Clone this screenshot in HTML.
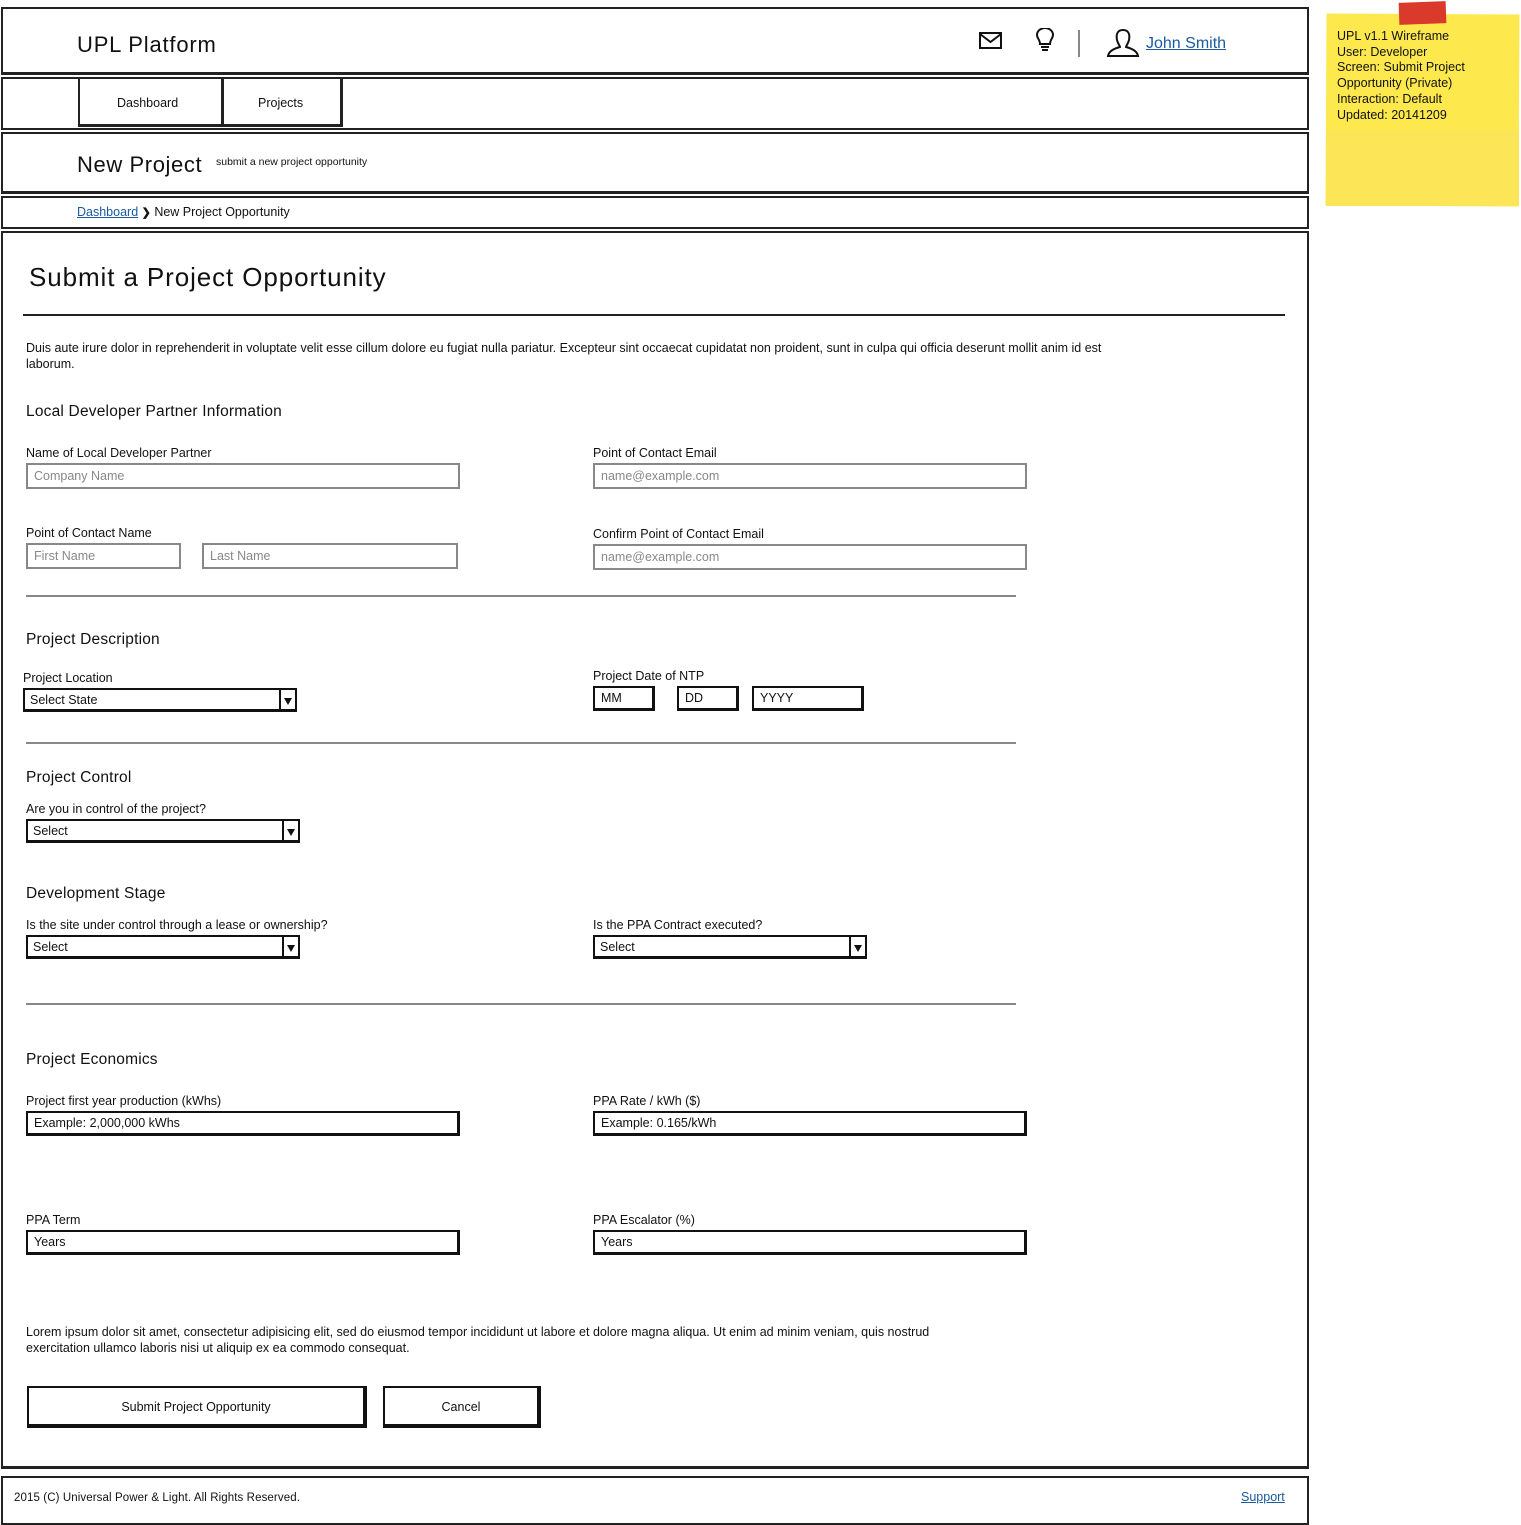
<!DOCTYPE html>
<html><head><meta charset="utf-8">
<style>
*{box-sizing:border-box;margin:0;padding:0}
body{width:1521px;height:1525px;background:#fff;position:relative;font-family:"Liberation Sans",sans-serif;color:#111;overflow:hidden}
.a{position:absolute}
.box{position:absolute;border:2px solid #222;background:#fff}
.t{position:absolute;font-size:12.5px;white-space:nowrap;margin-top:1px}
.h{position:absolute;font-size:15.5px;white-space:nowrap;margin-top:1px;letter-spacing:0.2px}
.in{position:absolute;border:2px solid #888;height:26px;font-size:12.5px;color:#888;padding:4px 6px;background:#fff}
.in2{position:absolute;border:2px solid #111;height:25px;font-size:12.5px;color:#111;padding:3px 6px;background:#fff;border-right-width:3px;border-bottom-width:3px}
.sel{position:absolute;border:2px solid #111;height:24px;font-size:12.5px;padding:3px 5px;background:#fff;border-bottom-width:3px}
.sel:after{content:"";position:absolute;right:14px;top:-2px;bottom:-3px;border-left:2px solid #111}
.sel i{position:absolute;right:3px;top:8px;width:0;height:0;border-left:4px solid transparent;border-right:4px solid transparent;border-top:7px solid #111}
.hr{position:absolute;height:2px;background:#888}
.btn{position:absolute;border:2px solid #111;border-right-width:4px;border-bottom-width:4px;background:#fff;font-size:12.5px;text-align:center}
a{color:#1a5aa0;text-decoration:underline}
</style></head><body>

<!-- header -->
<div class="box" style="left:1px;top:7px;width:1308px;height:68px;border-bottom-width:3px"></div>
<div class="a" style="left:77px;top:32px;font-size:22px;letter-spacing:0.8px">UPL Platform</div>
<svg class="a" style="left:978px;top:31px" width="26" height="20" viewBox="0 0 26 20"><rect x="2" y="2" width="21" height="15" fill="none" stroke="#111" stroke-width="2"/><path d="M2 3 L12.5 11 L23 3" fill="none" stroke="#111" stroke-width="2"/></svg>
<svg class="a" style="left:1035px;top:28px" width="20" height="26" viewBox="0 0 20 26"><path d="M5 16 C5 12 2 10 2 7 A8 7 0 0 1 18 7 C18 10 15 12 15 16 Z" fill="none" stroke="#111" stroke-width="2"/><path d="M6 19 H14 M7 22 H13" stroke="#111" stroke-width="2"/></svg>
<div class="a" style="left:1078px;top:30px;width:2px;height:27px;background:#888"></div>
<svg class="a" style="left:1106px;top:28px" width="34" height="30" viewBox="0 0 34 30"><path d="M17 2 C11 2 10 7 11 12 C12 16 14 18 14 19 C10 20 3 22 2 28 H32 C31 22 24 20 20 19 C20 18 22 16 23 12 C24 7 23 2 17 2 Z" fill="none" stroke="#111" stroke-width="2"/></svg>
<div class="a" style="left:1146px;top:35px;font-size:16px"><a>John Smith</a></div>

<!-- nav -->
<div class="box" style="left:1px;top:77px;width:1308px;height:53px"></div>
<div class="box" style="left:78px;top:77px;width:146px;height:50px;border-right-width:3px;border-bottom-width:3px"></div>
<div class="box" style="left:222px;top:77px;width:121px;height:50px;border-right-width:3px;border-bottom-width:3px"></div>
<div class="t" style="left:117px;top:95px">Dashboard</div>
<div class="t" style="left:258px;top:95px">Projects</div>

<!-- title -->
<div class="box" style="left:1px;top:132px;width:1308px;height:62px;border-bottom-width:3px"></div>
<div class="a" style="left:77px;top:152px;font-size:22px;letter-spacing:0.6px">New Project</div>
<div class="a" style="left:216px;top:156px;font-size:10.5px">submit a new project opportunity</div>

<!-- breadcrumb -->
<div class="box" style="left:1px;top:196px;width:1308px;height:33px"></div>
<div class="t" style="left:77px;top:204px"><a>Dashboard</a> <b style="font-size:11px">&#x276F;</b> New Project Opportunity</div>

<!-- content -->
<div class="box" style="left:1px;top:231px;width:1308px;height:1238px;border-bottom-width:3px"></div>
<div class="a" style="left:29px;top:262px;font-size:26px;letter-spacing:0.9px">Submit a Project Opportunity</div>
<div class="a" style="left:23px;top:314px;width:1262px;height:2px;background:#222"></div>
<div class="a" style="left:26px;top:340px;width:1200px;font-size:12.5px;line-height:16px">Duis aute irure dolor in reprehenderit in voluptate velit esse cillum dolore eu fugiat nulla pariatur. Excepteur sint occaecat cupidatat non proident, sunt in culpa qui officia deserunt mollit anim id est<br>laborum.</div>

<div class="h" style="left:26px;top:402px">Local Developer Partner Information</div>
<div class="t" style="left:26px;top:445px">Name of Local Developer Partner</div>
<div class="in" style="left:26px;top:463px;width:434px">Company Name</div>
<div class="t" style="left:593px;top:445px">Point of Contact Email</div>
<div class="in" style="left:593px;top:463px;width:434px">name@example.com</div>
<div class="t" style="left:26px;top:525px">Point of Contact Name</div>
<div class="in" style="left:26px;top:543px;width:155px">First Name</div>
<div class="in" style="left:202px;top:543px;width:256px">Last Name</div>
<div class="t" style="left:593px;top:526px">Confirm Point of Contact Email</div>
<div class="in" style="left:593px;top:544px;width:434px">name@example.com</div>
<div class="hr" style="left:26px;top:595px;width:990px"></div>

<div class="h" style="left:26px;top:630px">Project Description</div>
<div class="t" style="left:23px;top:670px">Project Location</div>
<div class="sel" style="left:23px;top:688px;width:274px">Select State<i></i></div>
<div class="t" style="left:593px;top:668px">Project Date of NTP</div>
<div class="in2" style="left:593px;top:686px;width:62px">MM</div>
<div class="in2" style="left:677px;top:686px;width:62px">DD</div>
<div class="in2" style="left:752px;top:686px;width:112px">YYYY</div>
<div class="hr" style="left:26px;top:742px;width:990px"></div>

<div class="h" style="left:26px;top:768px">Project Control</div>
<div class="t" style="left:26px;top:801px">Are you in control of the project?</div>
<div class="sel" style="left:26px;top:819px;width:274px">Select<i></i></div>

<div class="h" style="left:26px;top:884px">Development Stage</div>
<div class="t" style="left:26px;top:917px">Is the site under control through a lease or ownership?</div>
<div class="sel" style="left:26px;top:935px;width:274px">Select<i></i></div>
<div class="t" style="left:593px;top:917px">Is the PPA Contract executed?</div>
<div class="sel" style="left:593px;top:935px;width:274px">Select<i></i></div>
<div class="hr" style="left:26px;top:1003px;width:990px"></div>

<div class="h" style="left:26px;top:1050px">Project Economics</div>
<div class="t" style="left:26px;top:1093px">Project first year production (kWhs)</div>
<div class="in2" style="left:26px;top:1111px;width:434px">Example: 2,000,000 kWhs</div>
<div class="t" style="left:593px;top:1093px">PPA Rate / kWh ($)</div>
<div class="in2" style="left:593px;top:1111px;width:434px">Example: 0.165/kWh</div>
<div class="t" style="left:26px;top:1212px">PPA Term</div>
<div class="in2" style="left:26px;top:1230px;width:434px">Years</div>
<div class="t" style="left:593px;top:1212px">PPA Escalator (%)</div>
<div class="in2" style="left:593px;top:1230px;width:434px">Years</div>

<div class="a" style="left:26px;top:1324px;width:975px;font-size:12.5px;line-height:16px">Lorem ipsum dolor sit amet, consectetur adipisicing elit, sed do eiusmod tempor incididunt ut labore et dolore magna aliqua. Ut enim ad minim veniam, quis nostrud<br>exercitation ullamco laboris nisi ut aliquip ex ea commodo consequat.</div>
<div class="btn" style="left:27px;top:1386px;width:340px;height:42px;padding-top:12px">Submit Project Opportunity</div>
<div class="btn" style="left:383px;top:1386px;width:158px;height:42px;padding-top:12px">Cancel</div>

<!-- footer -->
<div class="box" style="left:1px;top:1476px;width:1308px;height:49px"></div>
<div class="a" style="left:14px;top:1492px;font-size:11.5px;letter-spacing:0.1px">2015 (C) Universal Power &amp; Light. All Rights Reserved.</div>
<div class="a" style="left:1241px;top:1490px;font-size:12.5px"><a>Support</a></div>

<!-- sticky -->
<div class="a" style="left:1326px;top:14px;width:193px;height:192px;background:#fde94e;transform:rotate(0.3deg)"></div>
<div class="a" style="left:1326px;top:130px;width:193px;height:76px;background:#fde558"></div>
<div class="a" style="left:1399px;top:2px;width:47px;height:22px;background:#d93a2b;transform:rotate(-2deg)"></div>
<div class="a" style="left:1337px;top:29px;font-size:12.5px;line-height:15.7px">UPL v1.1 Wireframe<br>User: Developer<br>Screen: Submit Project<br>Opportunity (Private)<br>Interaction: Default<br>Updated: 20141209</div>
</body></html>
